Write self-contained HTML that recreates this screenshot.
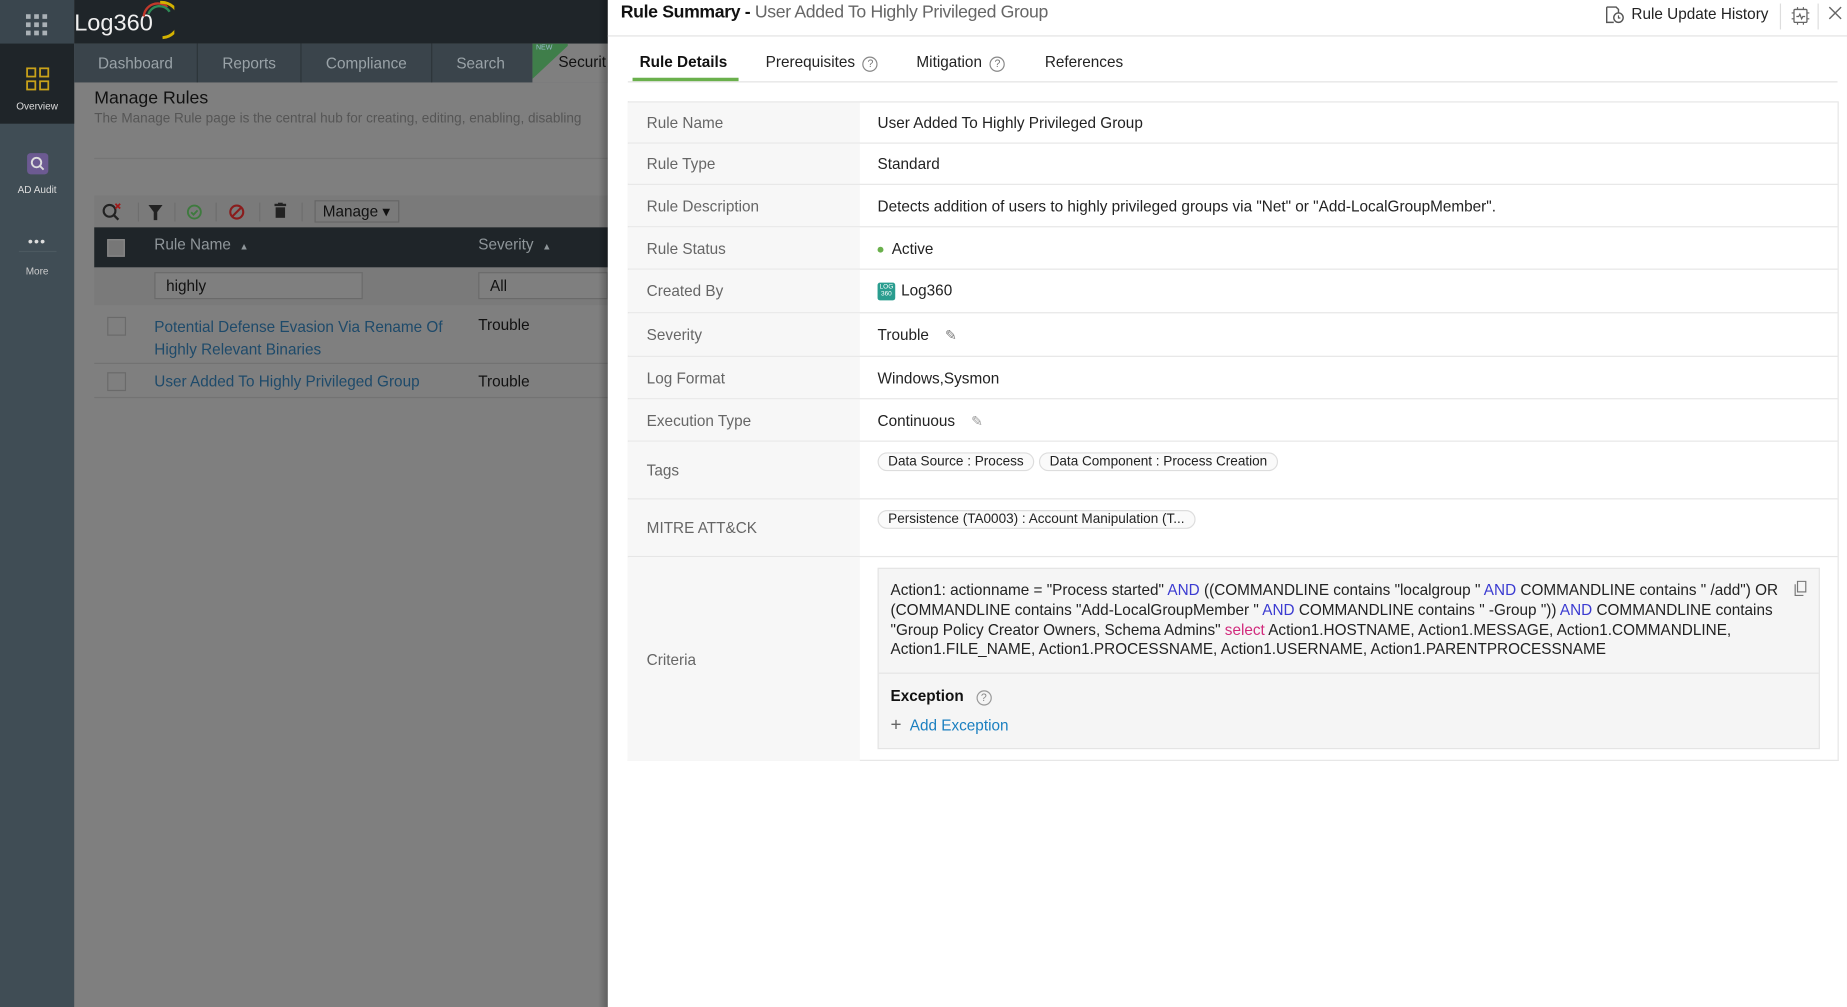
<!DOCTYPE html>
<html><head><meta charset="utf-8">
<style>
*{box-sizing:border-box;margin:0;padding:0}
html,body{width:1847px;height:1007px;overflow:hidden;background:#7f7f7f}
body{font-family:"Liberation Sans","DejaVu Sans",sans-serif}
#w{position:absolute;left:0;top:0;width:1568px;height:855px;transform:scale(1.17793);transform-origin:0 0;background:#7f7f7f}
.a{position:absolute}
.row{position:absolute;left:533px;width:1027px;border-top:1px solid #e6e6e6}
.row .l{position:absolute;left:0;top:0;bottom:0;width:197px;background:#f7f7f7}
.row .l span{position:absolute;left:16px;top:50%;transform:translateY(-50%);color:#666;font-size:13px}
.row .r{position:absolute;left:212px;top:50%;transform:translateY(-50%);color:#222;font-size:13px;white-space:nowrap}
.tag{display:inline-block;border:1px solid #ddd;border-radius:9px;padding:1px 8px;font-size:11.5px;color:#222;background:#fafafa;margin-right:4px}
.kw{color:#3b3bd1}.sel{color:#d12a7c}
</style></head><body><div id="w">
<div class="a" style="left:0;top:0;width:63px;height:855px;background:#404d55"></div>
<div class="a" style="left:0;top:0;width:63px;height:37px;background:#3a464e"></div>
<div class="a" style="left:22px;top:12px;width:20px;height:20px">
<svg width="20" height="20"><g fill="#aab1b6"><rect x="0" y="0" width="4" height="4"/><rect x="7" y="0" width="4" height="4"/><rect x="14" y="0" width="4" height="4"/><rect x="0" y="7" width="4" height="4"/><rect x="7" y="7" width="4" height="4"/><rect x="14" y="7" width="4" height="4"/><rect x="0" y="14" width="4" height="4"/><rect x="7" y="14" width="4" height="4"/><rect x="14" y="14" width="4" height="4"/></g></svg></div>
<div class="a" style="left:63px;top:0;width:453px;height:37px;background:#1f2529"></div>
<div class="a" style="left:63px;top:9px;color:#f0f0f0;font-size:20px">Log360</div>
<svg class="a" style="left:118px;top:0" width="30" height="34"><path d="M4 14 A12 12 0 0 1 24 6" stroke="#c0392b" stroke-width="2" fill="none"/><path d="M8 12 A10 10 0 0 1 26 10" stroke="#2e8b57" stroke-width="2" fill="none"/><path d="M18 2 A14 14 0 0 1 20 32" stroke="#d4b200" stroke-width="2.5" fill="none"/></svg>
<div class="a" style="left:0;top:37px;width:63px;height:68px;background:#1f2529"></div>
<svg class="a" style="left:22px;top:57px" width="20" height="20"><g fill="none" stroke="#c9a21a" stroke-width="1.5"><rect x="1" y="1" width="7" height="7"/><rect x="12" y="1" width="7" height="7"/><rect x="1" y="12" width="7" height="7"/><rect x="12" y="12" width="7" height="7"/></g></svg>
<div class="a" style="left:0;top:85px;width:63px;text-align:center;color:#ddd;font-size:8.5px">Overview</div>
<div class="a" style="left:23px;top:130px;width:18px;height:18px;background:#6c5a92;border-radius:3px"></div>
<svg class="a" style="left:25px;top:132px" width="14" height="14"><circle cx="6" cy="6" r="4" stroke="#ddd" stroke-width="1.6" fill="none"/><path d="M9 9l3 3" stroke="#ddd" stroke-width="1.6"/></svg>
<div class="a" style="left:0;top:156px;width:63px;text-align:center;color:#ddd;font-size:8.5px">AD Audit</div>
<div class="a" style="left:16px;top:213px;width:32px;height:1px;background:#4c5960"></div>
<div class="a" style="left:0;top:198px;width:63px;text-align:center;color:#ddd;font-size:12px;letter-spacing:1px">•••</div>
<div class="a" style="left:0;top:225px;width:63px;text-align:center;color:#ccc;font-size:8.5px">More</div>
<div class="a" style="left:63px;top:37px;width:453px;height:33px;background:#3a444b"></div>
<div class="a" style="left:63px;top:37px;height:33px;display:flex;color:#9aa3a8;font-size:13px">
<div style="width:105px;text-align:center;line-height:33px;border-right:1px solid #2c3439">Dashboard</div>
<div style="width:88px;text-align:center;line-height:33px;border-right:1px solid #2c3439">Reports</div>
<div style="width:111px;text-align:center;line-height:33px;border-right:1px solid #2c3439">Compliance</div>
<div style="width:82px;text-align:center;line-height:33px">Search</div>
</div>
<div class="a" style="left:452px;top:37px;width:64px;height:33px;background:#7f7f7f"></div>
<svg class="a" style="left:452px;top:37px" width="30" height="30"><path d="M0 0H32L0 30Z" fill="#3f7e4a"/></svg>
<div class="a" style="left:455px;top:38px;color:#9bc;font-size:6px">NEW</div>
<div class="a" style="left:474px;top:45px;color:#111;font-size:13px">Securit</div>
<div class="a" style="left:80px;top:75px;color:#111;font-size:15px">Manage Rules</div>
<div class="a" style="left:80px;top:95px;color:#555;font-size:11.5px;white-space:nowrap">The Manage Rule page is the central hub for creating, editing, enabling, disabling</div>
<div class="a" style="left:80px;top:134px;width:436px;height:1px;background:#757575"></div>
<div class="a" style="left:80px;top:166px;width:436px;height:27px;background:#7a7a7a"></div>
<svg class="a" style="left:86px;top:171px" width="18" height="17"><circle cx="7" cy="8" r="5" stroke="#222" stroke-width="1.8" fill="none"/><path d="M10.5 11.5l4 4" stroke="#222" stroke-width="2"/><path d="M12 2l4 4M16 2l-4 4" stroke="#a01a1a" stroke-width="1.5"/></svg>
<div class="a" style="left:117px;top:172px;width:1px;height:16px;background:#6e6e6e"></div>
<svg class="a" style="left:126px;top:174px" width="12" height="13"><path d="M0 0H12L7.5 6V13H4.5V6Z" fill="#222"/></svg>
<div class="a" style="left:148px;top:172px;width:1px;height:16px;background:#6e6e6e"></div>
<svg class="a" style="left:158px;top:173px" width="14" height="14"><circle cx="7" cy="7" r="5.5" stroke="#3e7a3e" stroke-width="1.6" fill="none"/><path d="M4.3 7.2l2 2 3.4-3.6" stroke="#3e7a3e" stroke-width="1.6" fill="none"/></svg>
<div class="a" style="left:183px;top:172px;width:1px;height:16px;background:#6e6e6e"></div>
<svg class="a" style="left:194px;top:173px" width="14" height="14"><circle cx="7" cy="7" r="5.5" stroke="#8a1c1c" stroke-width="1.8" fill="none"/><path d="M3.5 10.5l7-7" stroke="#8a1c1c" stroke-width="1.8"/></svg>
<div class="a" style="left:220px;top:172px;width:1px;height:16px;background:#6e6e6e"></div>
<svg class="a" style="left:233px;top:172px" width="10" height="13"><rect x="0" y="1" width="10" height="2" fill="#222"/><rect x="3" y="0" width="4" height="2" fill="#222"/><rect x="1" y="4" width="8" height="9" fill="#222"/></svg>
<div class="a" style="left:256px;top:172px;width:1px;height:16px;background:#6e6e6e"></div>
<div class="a" style="left:267px;top:170px;width:72px;height:19px;border:1px solid #666;color:#111;font-size:13px;line-height:17px;padding-left:6px">Manage ▾</div>
<div class="a" style="left:80px;top:193px;width:436px;height:34px;background:#1f2529"></div>
<div class="a" style="left:91px;top:203px;width:15px;height:15px;background:#777;border:1px solid #888"></div>
<div class="a" style="left:131px;top:200px;color:#8f969a;font-size:13px">Rule Name &nbsp;<span style="font-size:8px">▲</span></div>
<div class="a" style="left:406px;top:200px;color:#8f969a;font-size:13px">Severity &nbsp;<span style="font-size:8px">▲</span></div>
<div class="a" style="left:80px;top:227px;width:436px;height:32px;background:#7a7a7a"></div>
<div class="a" style="left:131px;top:231px;width:177px;height:23px;border:1px solid #6a6a6a;background:#7f7f7f;color:#111;font-size:13px;line-height:21px;padding-left:9px">highly</div>
<div class="a" style="left:406px;top:231px;width:110px;height:23px;border:1px solid #6a6a6a;background:#7f7f7f;color:#111;font-size:13px;line-height:21px;padding-left:9px">All</div>
<div class="a" style="left:91px;top:269px;width:16px;height:16px;border:1px solid #6a6a6a"></div>
<div class="a" style="left:131px;top:268px;color:#1e4a6a;font-size:13px;line-height:19px">Potential Defense Evasion Via Rename Of<br>Highly Relevant Binaries</div>
<div class="a" style="left:406px;top:268px;color:#111;font-size:13px">Trouble</div>
<div class="a" style="left:80px;top:308px;width:436px;height:1px;background:#737373"></div>
<div class="a" style="left:91px;top:316px;width:16px;height:16px;border:1px solid #6a6a6a"></div>
<div class="a" style="left:131px;top:316px;color:#1e4a6a;font-size:13px">User Added To Highly Privileged Group</div>
<div class="a" style="left:406px;top:316px;color:#111;font-size:13px">Trouble</div>
<div class="a" style="left:80px;top:337px;width:436px;height:1px;background:#737373"></div>
<div class="a" style="left:508px;top:0;width:8px;height:855px;background:linear-gradient(90deg,rgba(0,0,0,0),rgba(0,0,0,.25))"></div>

<div class="a" style="left:516px;top:0;width:1052px;height:855px;background:#fff"></div>
<div class="a" style="left:516px;top:30px;width:1052px;height:1px;background:#e3e3e3"></div>
<div class="a" style="left:527px;top:2px;font-size:15px;color:#111;white-space:nowrap;letter-spacing:-0.3px"><b style="font-weight:600">Rule Summary -</b> <span style="color:#666">User Added To Highly Privileged Group</span></div>
<svg class="a" style="left:1363px;top:5px" width="16" height="15"><path d="M1 1h8l2 2v3M1 1v13h6" stroke="#555" stroke-width="1.2" fill="none"/><circle cx="11" cy="10" r="4" stroke="#555" stroke-width="1.2" fill="none"/><path d="M11 8v2.3h1.6" stroke="#555" stroke-width="1" fill="none"/></svg>
<div class="a" style="left:1385px;top:4px;font-size:13px;color:#222">Rule Update History</div>
<div class="a" style="left:1511px;top:3px;width:1px;height:22px;background:#ddd"></div>
<svg class="a" style="left:1520px;top:5px" width="17" height="17"><rect x="3" y="3" width="11" height="11" rx="1" stroke="#666" stroke-width="1.1" fill="none"/><path d="M6 1v2M11 1v2M6 14v2M11 14v2M1 6h2M1 11h2M14 6h2M14 11h2M5 9h2l1-2 1.5 4 1-2h2" stroke="#666" stroke-width="1" fill="none"/></svg>
<div class="a" style="left:1543px;top:3px;width:1px;height:22px;background:#ddd"></div>
<svg class="a" style="left:1552px;top:5px" width="12" height="12"><path d="M1 1l10 10M11 1L1 11" stroke="#666" stroke-width="1.2"/></svg>

<div class="a" style="left:543px;top:45px;font-size:13px;color:#111;font-weight:bold">Rule Details</div>
<div class="a" style="left:537px;top:66px;width:90px;height:3px;background:#6ab04c"></div>
<div class="a" style="left:650px;top:45px;font-size:13px;color:#222">Prerequisites <span style="display:inline-block;width:13px;height:13px;border:1px solid #888;border-radius:50%;font-size:9px;text-align:center;line-height:11px;color:#777;margin-left:3px">?</span></div>
<div class="a" style="left:778px;top:45px;font-size:13px;color:#222">Mitigation <span style="display:inline-block;width:13px;height:13px;border:1px solid #888;border-radius:50%;font-size:9px;text-align:center;line-height:11px;color:#777;margin-left:3px">?</span></div>
<div class="a" style="left:887px;top:45px;font-size:13px;color:#222">References</div>
<div class="a" style="left:533px;top:69px;width:1027px;height:1px;background:#e3e3e3"></div>

<div class="a" style="left:533px;top:86px;width:1028px;height:560px;border:1px solid #e6e6e6;border-top:none"></div>
<div class="row" style="top:86px;height:35px"><div class="l"><span>Rule Name</span></div><div class="r">User Added To Highly Privileged Group</div></div>
<div class="row" style="top:121px;height:35px"><div class="l"><span>Rule Type</span></div><div class="r">Standard</div></div>
<div class="row" style="top:156px;height:36px"><div class="l"><span>Rule Description</span></div><div class="r">Detects addition of users to highly privileged groups via "Net" or "Add-LocalGroupMember".</div></div>
<div class="row" style="top:192px;height:36px"><div class="l"><span>Rule Status</span></div><div class="r"><span style="display:inline-block;width:5px;height:5px;border-radius:50%;background:#6ab04c;vertical-align:middle;margin-right:7px"></span>Active</div></div>
<div class="row" style="top:228px;height:37px"><div class="l"><span>Created By</span></div><div class="r"><span style="display:inline-block;width:15px;height:15px;background:#2a9d8f;border-radius:2px;vertical-align:middle;color:#fff;font-size:5.5px;line-height:6px;text-align:center;padding-top:1px;margin-right:5px">LOG<br>360</span>Log360</div></div>
<div class="row" style="top:265px;height:37px"><div class="l"><span>Severity</span></div><div class="r">Trouble <span style="color:#777;margin-left:10px;font-size:12px">✎</span></div></div>
<div class="row" style="top:302px;height:36px"><div class="l"><span>Log Format</span></div><div class="r">Windows,Sysmon</div></div>
<div class="row" style="top:338px;height:36px"><div class="l"><span>Execution Type</span></div><div class="r">Continuous <span style="color:#999;margin-left:10px;font-size:12px">✎</span></div></div>
<div class="row" style="top:374px;height:49px"><div class="l"><span>Tags</span></div><div class="r" style="top:8px;transform:none"><span class="tag">Data Source : Process</span><span class="tag">Data Component : Process Creation</span></div></div>
<div class="row" style="top:423px;height:49px"><div class="l"><span>MITRE ATT&amp;CK</span></div><div class="r" style="top:8px;transform:none"><span class="tag">Persistence (TA0003) : Account Manipulation (T...</span></div></div>
<div class="row" style="top:472px;height:174px"><div class="l"><span>Criteria</span></div></div>
<div class="a" style="left:745px;top:482px;width:800px;height:154px;background:#f5f5f5;border:1px solid #e4e4e4"></div>
<div class="a" style="left:746px;top:571px;width:798px;height:1px;background:#e4e4e4"></div>
<div class="a" style="left:756px;top:493px;width:766px;font-size:13px;line-height:16.8px;color:#222">Action1: actionname = "Process started" <span class="kw">AND</span> ((COMMANDLINE contains "localgroup " <span class="kw">AND</span> COMMANDLINE contains " /add") OR (COMMANDLINE contains "Add-LocalGroupMember " <span class="kw">AND</span> COMMANDLINE contains " -Group ")) <span class="kw">AND</span> COMMANDLINE contains "Group Policy Creator Owners, Schema Admins" <span class="sel">select</span> Action1.HOSTNAME, Action1.MESSAGE, Action1.COMMANDLINE, Action1.FILE_NAME, Action1.PROCESSNAME, Action1.USERNAME, Action1.PARENTPROCESSNAME</div>
<svg class="a" style="left:1523px;top:493px" width="11" height="13"><rect x="3" y="0.5" width="7" height="9" stroke="#777" fill="none"/><path d="M1 3v9.5h7" stroke="#777" fill="none"/></svg>
<div class="a" style="left:756px;top:583px;font-size:13px;color:#111;font-weight:bold">Exception <span style="display:inline-block;width:13px;height:13px;border:1px solid #999;border-radius:50%;font-size:9px;text-align:center;line-height:11px;color:#888;margin-left:7px;font-weight:normal">?</span></div>
<div class="a" style="left:756px;top:607px;font-size:13px;color:#1a7fc0"><span style="color:#666;font-size:16px;margin-right:7px">+</span>Add Exception</div>
</div></body></html>
